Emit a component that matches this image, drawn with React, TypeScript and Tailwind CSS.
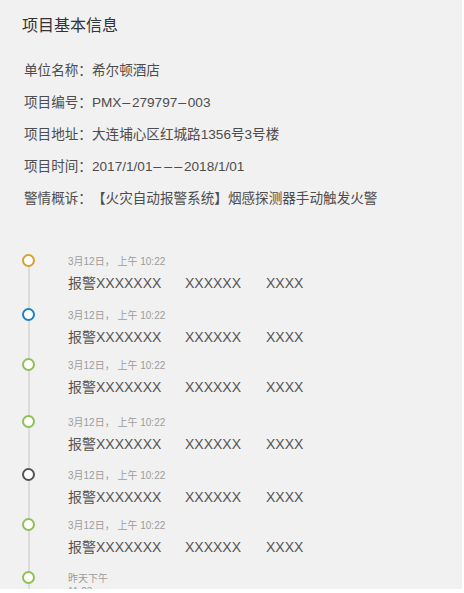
const info = [
  { label: "单位名称：", value: "希尔顿酒店" },
  { label: "项目编号：", value: "PMX-279797-003" },
  { label: "项目地址：", value: "大连埔心区红城路1356号3号楼" },
  { label: "项目时间：", value: "2017/1/01---2018/1/01" },
  { label: "警情概诉：", value: "【火灾自动报警系统】烟感探测器手动触发火警" },
]

const events = [
  { color: "border-[#d9a02a]", h: "h-[54px]" },
  { color: "border-[#1f7fc6]", h: "h-[50px]" },
  { color: "border-[#8cc152]", h: "h-[57px]" },
  { color: "border-[#8cc152]", h: "h-[53px]" },
  { color: "border-[#555555]", h: "h-[50px]" },
  { color: "border-[#8cc152]", h: "h-[53px]" },
]

// the source font draws "-" much wider than Arial does
function Dashed({ text }: { text: string }) {
  const parts = text.split("-")
  return (
    <>
      {parts.map((p, i) => (
        <span key={i}>
          {p}
          {i < parts.length - 1 && <span className="inline-block w-[10.5px] scale-x-[2.4] text-center">-</span>}
        </span>
      ))}
    </>
  )
}

function TimelineItem({
  color,
  time,
  h,
  last,
}: {
  color: string
  time: React.ReactNode
  h: string
  last?: boolean
}) {
  return (
    <div className={`flex ${h}`}>
      {/* dot + rail */}
      <div className="flex w-[46px] flex-col items-center pl-[22px] pr-[11px]">
        <span className={`h-[13px] w-[13px] shrink-0 rounded-full border-[2.5px] bg-white ${color}`} />
        <span className="w-[2px] flex-1 bg-[#dcdcdc]" />
      </div>
      <div className="pl-[22px]">
        <div className="mt-[1px] text-[10px] leading-[13px] text-[#9c9c9c]">{time}</div>
        {!last && (
          <div className="mt-[5px] flex text-[14px] leading-[20px] text-[#555555]">
            <span className="w-[117px]">报警XXXXXXX</span>
            <span className="w-[81px]">XXXXXX</span>
            <span>XXXX</span>
          </div>
        )}
      </div>
    </div>
  )
}

export default function App() {
  return (
    <div
      className="h-[589px] w-[462px] overflow-hidden bg-[#f1f1f1]"
      style={{ fontFamily: '"Liberation Sans", "Noto Sans CJK SC", sans-serif' }}
    >
      {/* 项目基本信息 */}
      <div className="px-[22px] pt-4">
        <h2 className="text-[16px] font-normal leading-[20px] text-[#333333]">项目基本信息</h2>
      </div>
      <div className="mt-[25px] flex flex-col gap-3 px-6 text-[13.6px] leading-[20px] text-[#4d4d4d]">
        {info.map((row) => (
          <div key={row.label} className="flex">
            <span>{row.label}</span>
            <span>
              <Dashed text={row.value} />
            </span>
          </div>
        ))}
      </div>

      {/* 报警时间线 */}
      <div className="mt-[45px]">
        {events.map((e, i) => (
          <TimelineItem key={i} color={e.color} h={e.h} time="3月12日， 上午 10:22" />
        ))}
        <TimelineItem
          color="border-[#8cc152]"
          h="h-[53px]"
          last
          time={
            <>
              昨天下午
              <br />
              11:28
            </>
          }
        />
      </div>
    </div>
  )
}
